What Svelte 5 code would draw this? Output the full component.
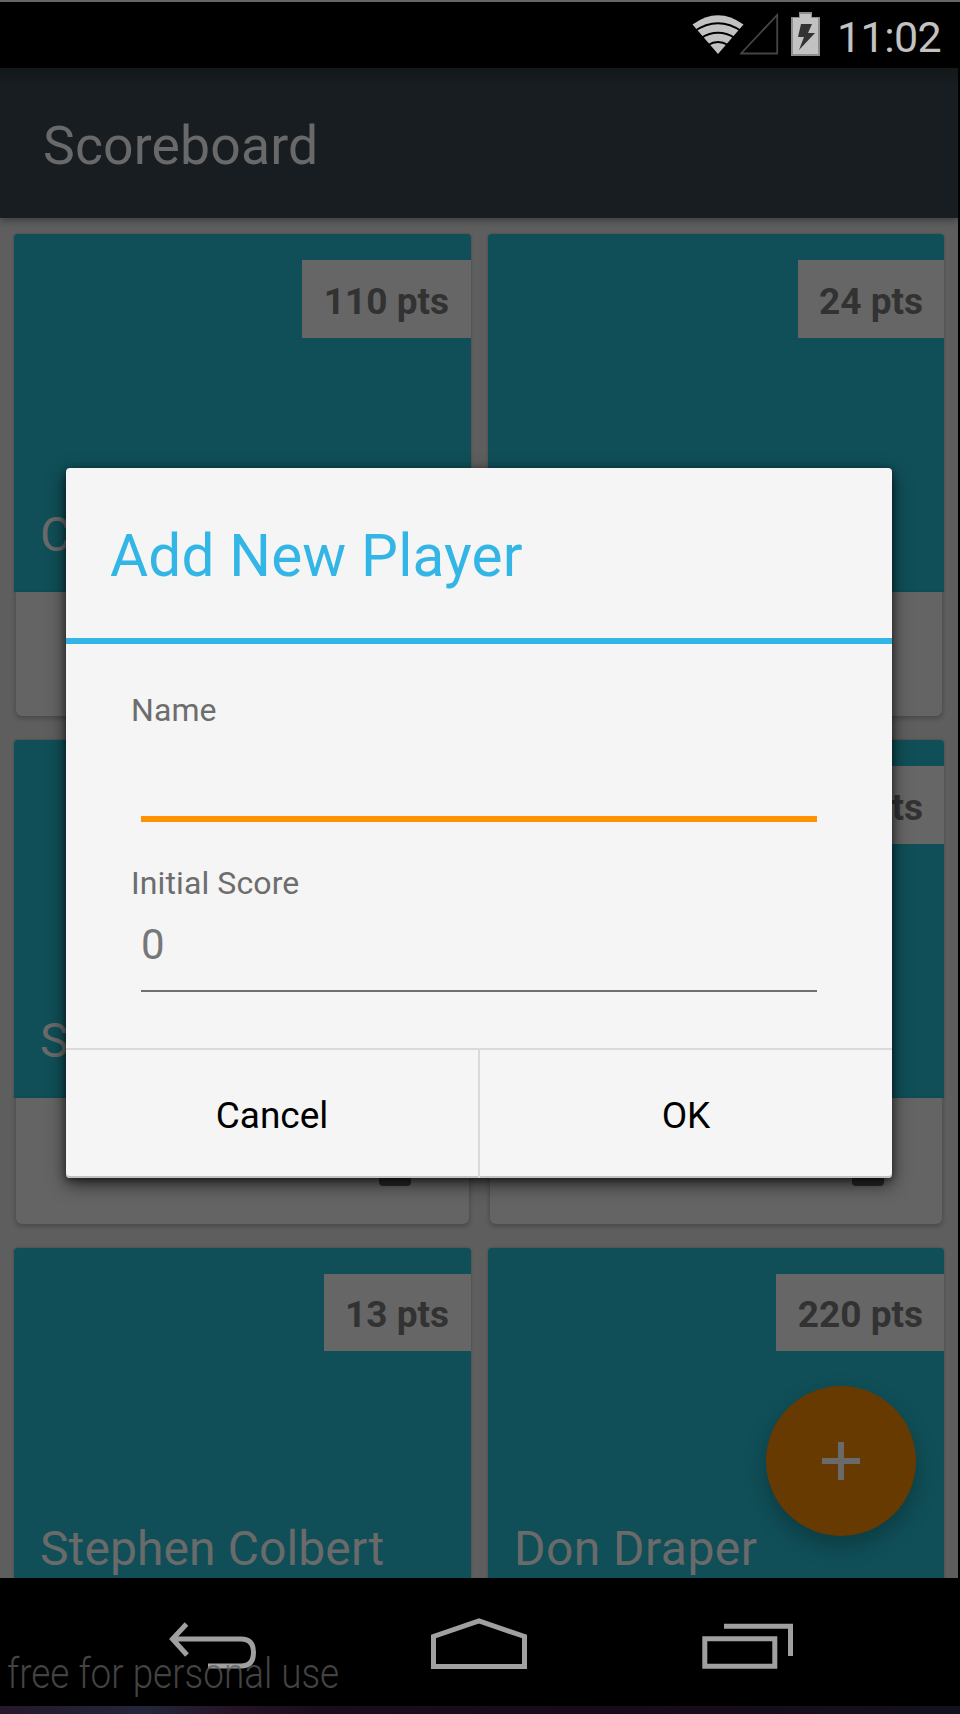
<script>
  const players = [
    { name: 'C', points: '110 pts' },
    { name: '', points: '24 pts' },
    { name: 'S', points: '' },
    { name: '', points: 'pts' },
    { name: 'Stephen Colbert', points: '13 pts' },
    { name: 'Don Draper', points: '220 pts' }
  ];
</script>

<div class="device">
  <header class="status">
    <svg class="wifi" width="52" height="40" viewBox="0 0 52 40">
      <path d="M.5 10.500Q26-8 51.500 10.500L26 40Z" fill="#c2c2c2" />
      <g fill="none" stroke="#000" stroke-width="2">
        <path d="M2 17.500Q26 1 50 17.500" />
        <path d="M9 24Q26 13.500 43 24" />
        <path d="M16 31Q26 25 36 31" />
      </g>
    </svg>
    <svg class="signal" width="39" height="42" viewBox="0 0 39 42">
      <path d="M1 40.5L37.200 2V40.500Z" fill="none" stroke="#454545" stroke-width="1.8" />
    </svg>
    <svg class="battery" width="30" height="44" viewBox="0 0 30 44">
      <path d="M8 0H21V5H29V44H0V5H8Z" fill="#8d8d8d" />
      <path d="M9 2H20V6H27V42H2V6H9Z" fill="#c2c2c2" />
      <path d="M10 12H21L17 21H24L8 38L13 25H7Z" fill="#333" />
    </svg>
    <span class="clock">11:02</span>
  </header>

  <div class="appbar"><h1>Scoreboard</h1></div>

  <main class="board">
    {#each players as player}
      <article class="card">
        <div class="cover">
          {#if player.points}<span class="points">{player.points}</span>{/if}
          <span class="name">{player.name}</span>
        </div>
        <div class="tools"><i></i></div>
      </article>
    {/each}
    <button class="fab" aria-label="Add">
      <svg width="38" height="38" viewBox="0 0 38 38"><path d="M19 0V38M0 19H38" stroke="#6a6a6a" stroke-width="6" /></svg>
    </button>
  </main>

  <nav class="nav">
    <svg width="88" height="52" viewBox="0 0 88 52">
      <path d="M18.500 6L4.500 21L19 37M4.500 21H73Q85.500 21 85.500 34.500Q85.500 48 73 48H40" />
    </svg>
    <svg width="98" height="52" viewBox="0 0 98 52">
      <path d="M3.500 48.500V18.500L49 3L94.500 18.500V48.500Z" />
    </svg>
    <svg width="92" height="52" viewBox="0 0 92 52">
      <path d="M2.800 20.800H72.800V48.200H2.800ZM22 8.200H88.500V38" stroke-width="5" />
    </svg>
    <span class="license">free for personal use</span>
  </nav>
  <div class="desktop"></div>

  <section class="dialog">
    <h2><span>Add New Player</span></h2>
    <form>
      <span class="label">Name</span>
      <div class="field focused"></div>
      <span class="label second">Initial Score</span>
      <div class="field score">0</div>
    </form>
    <footer><button>Cancel</button><button>OK</button></footer>
  </section>
</div>

<style>
  :global(body) { margin: 0; background: #000; }
  .device, .device * { box-sizing: border-box; }
  .device {
    position: relative;
    width: 960px;
    height: 1714px;
    display: flex;
    flex-direction: column;
    overflow: hidden;
    background: #000;
    font-family: Roboto, sans-serif;
  }
  .status {
    height: 68px;
    flex: none;
    display: flex;
    align-items: flex-start;
    justify-content: flex-end;
    padding-right: 17px;
    border-top: 2px solid #666;
    color: #c2c2c2;
  }
  .wifi { margin-top: 12px; }
  .signal { margin: 11px 0 0 -4px; }
  .battery { margin: 10px 16px 0 12px; }
  .clock { width: 106px; font-size: 43px; line-height: 50px; letter-spacing: -.6px; margin-top: 10px; white-space: nowrap; }
  .appbar {
    position: relative;
    z-index: 1;
    width: 958px;
    height: 150px;
    flex: none;
    display: flex;
    align-items: center;
    padding: 4px 0 0 43px;
    background: linear-gradient(#13181b, #171d20 20px);
    box-shadow: 0 2px 8px rgba(0, 0, 0, .4);
  }
  h1 { margin: 0; font-size: 53.5px; font-weight: 400; letter-spacing: .15px; color: #696969; }
  .board {
    position: relative;
    width: 958px;
    height: 1360px;
    flex: none;
    overflow: hidden;
    display: grid;
    grid-template-columns: 457px 456px;
    grid-template-rows: 482px 484px 484px;
    gap: 24px 17px;
    padding: 16px 14px;
    background: #5e5e5e;
  }
  .card { display: flex; flex-direction: column; }
  .cover {
    height: 358px;
    flex: none;
    display: flex;
    flex-direction: column;
    justify-content: space-between;
    padding: 26px 0 29px 26px;
    background: #104f58;
    border-radius: 4px 4px 0 0;
    box-shadow: 0 0 2px 1px rgba(0, 0, 0, .13);
  }
  .points {
    align-self: flex-end;
    height: 78px;
    padding: 5px 22px 0 21.500px;
    background: #666;
    color: #323232;
    font-size: 37px;
    line-height: 74px;
    font-weight: 700;
  }
  .card:nth-child(2n) .points { padding-right: 21px; }
  .card:nth-child(n + 5) .points { padding-top: 4px; height: 77px; }
  .name { margin-top: auto; font-size: 48px; line-height: 56px; letter-spacing: .1px; color: #6a6a6a; }
  .card:nth-child(2n) .name { letter-spacing: .45px; }
  .tools {
    flex: 1;
    display: flex;
    align-items: flex-end;
    justify-content: flex-end;
    margin: 0 2px;
    padding: 0 58px 38px 0;
    background: #646464;
    border-radius: 0 0 6px 6px;
    box-shadow: 0 2px 4px 1px rgba(0, 0, 0, .2);
  }
  .tools i { width: 32px; height: 34px; border-radius: 4px; background: #292929; }
  .fab {
    position: absolute;
    left: 766px;
    top: 1168px;
    width: 150px;
    height: 150px;
    display: grid;
    place-items: center;
    padding: 0;
    border: 0;
    border-radius: 50%;
    background: #663a00;
    box-shadow: 0 10px 22px rgba(0, 0, 0, .25);
  }
  .nav {
    position: relative;
    height: 128px;
    flex: none;
    display: flex;
    justify-content: space-between;
    padding: 40px 166px 0 168px;
    background: #000;
  }
  .nav svg { overflow: visible; fill: none; stroke: #a0a0a0; stroke-width: 5; }
  .license {
    position: absolute;
    left: 7px;
    bottom: 5px;
    font-size: 43px;
    line-height: 56px;
    font-weight: 300;
    white-space: nowrap;
    color: rgba(90, 90, 90, .75);
    transform: scaleX(.857);
    transform-origin: left;
  }
  .desktop { height: 8px; background: linear-gradient(90deg, #25182b, #24253b 15%, #251426 24%, #190d1c 33%, #180a18 60%, #14101d); }
  .dialog {
    position: absolute;
    left: 66px;
    top: 468px;
    width: 826px;
    height: 710px;
    display: flex;
    flex-direction: column;
    background: #f5f5f5;
    border-radius: 4px;
    box-shadow: inset 0 -2px #c1c1c1, 0 6px 18px rgba(0, 0, 0, .65), 0 2px 6px rgba(0, 0, 0, .4);
  }
  h2 {
    margin: 0;
    height: 176px;
    display: flex;
    align-items: center;
    padding: 5px 0 0 44px;
    border-bottom: 6px solid #33b5e5;
    color: #33b5e5;
    font-size: 58.5px;
    font-weight: 400;
    letter-spacing: .15px;
  }
  form { display: flex; flex-direction: column; height: 404px; padding: 46px 75px 0 65px; }
  .label { font-size: 32px; line-height: 40px; letter-spacing: .1px; color: #6d6d6d; }
  .second { margin-top: 41px; }
  .field { height: 89px; margin-left: 10px; border-bottom: 2px solid #707070; }
  .focused { height: 92px; border-bottom: 6px solid #ff9200; }
  .score { padding-bottom: 4px; line-height: 83px; font-size: 42px; color: #777; }
  footer { display: flex; height: 130px; border-top: 2px solid #dadada; }
  footer button {
    flex: 1;
    border: 0;
    padding: 3px 0 0;
    background: none;
    color: #000;
    font: 37px Roboto, sans-serif;
  }
  footer button + button { border-left: 2px solid #dadada; }
</style>
